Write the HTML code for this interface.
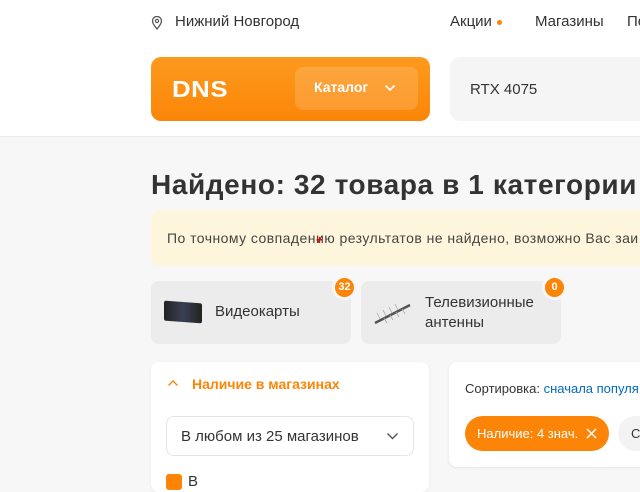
<!DOCTYPE html>
<html><head><meta charset="utf-8"><style>
*{margin:0;padding:0;box-sizing:border-box}
body{width:640px;height:480px;overflow:hidden;background:#f7f7f7;font-family:"Liberation Sans","DejaVu Sans",sans-serif;color:#333;position:relative}
.a{position:absolute}
</style></head><body>
<div class="a" style="left:0;top:0;width:640px;height:137px;background:#fff;border-bottom:1px solid #ececec"></div>
<svg class="a" style="left:151px;top:16px" width="12" height="14" viewBox="0 0 12 14"><path d="M6 13C3 9.5 1.5 7 1.5 5a4.5 4.5 0 0 1 9 0c0 2-1.5 4.5-4.5 8z" fill="none" stroke="#555" stroke-width="1.3"/><circle cx="6" cy="5" r="1.6" fill="none" stroke="#555" stroke-width="1.2"/></svg>
<div class="a" style="left:175px;top:13px;font-size:15px;color:#333">Нижний Новгород</div>
<div class="a" style="left:450px;top:13px;font-size:15px;color:#333">Акции</div>
<div class="a" style="left:497px;top:20px;width:5px;height:5px;border-radius:50%;background:#fc8507"></div>
<div class="a" style="left:535px;top:13px;font-size:15px;color:#333">Магазины</div>
<div class="a" style="left:627px;top:13px;font-size:15px;color:#333">По</div>
<div class="a" style="left:151px;top:57px;width:279px;height:64px;border-radius:10px;background:linear-gradient(180deg,#fd9a1e,#fb8608)"></div>
<div class="a" style="left:172px;top:76px;font-size:23px;font-weight:bold;color:#fff;letter-spacing:0.5px;transform:scaleX(1.12);transform-origin:left;line-height:26px">DNS</div>
<div class="a" style="left:295px;top:67px;width:123px;height:43px;border-radius:8px;background:rgba(255,255,255,0.15)"></div>
<div class="a" style="left:314px;top:79px;font-size:14px;font-weight:bold;color:#fff">Каталог</div>
<svg class="a" style="left:384px;top:84px" width="12" height="8" viewBox="0 0 12 8"><path d="M1.5 1.5L6 6l4.5-4.5" fill="none" stroke="#fff" stroke-width="1.6"/></svg>
<div class="a" style="left:450px;top:57px;width:200px;height:64px;border-radius:10px;background:#f5f5f5"></div>
<div class="a" style="left:470px;top:81px;font-size:15px;color:#333">RTX 4075</div>
<div class="a" style="left:151px;top:169px;font-size:28px;font-weight:bold;color:#333;white-space:nowrap;letter-spacing:0.6px">Найдено: 32 товара в 1 категории</div>
<div class="a" style="left:151px;top:210px;width:500px;height:56px;border-radius:10px;background:#fef6dc"></div>
<div class="a" style="left:167px;top:230px;font-size:14px;color:#444;white-space:nowrap;letter-spacing:0.45px">По точному совпадению результатов не найдено, возможно Вас заи</div>
<div class="a" style="left:151px;top:281px;width:200px;height:63px;border-radius:8px;background:#ececec"></div>
<div class="a" style="left:164px;top:302px;width:38px;height:20px;background:linear-gradient(90deg,#222,#3a3f55,#222);border-radius:2px;transform:skewY(4deg)"></div>
<div class="a" style="left:215px;top:303px;font-size:15px;color:#333">Видеокарты</div>
<div class="a" style="left:332px;top:275px;width:25px;height:25px;border-radius:50%;background:#fc8507;border:3px solid #f7f7f7;color:#fff;font-size:11px;font-weight:bold;text-align:center;line-height:19px">32</div>
<div class="a" style="left:361px;top:281px;width:200px;height:63px;border-radius:8px;background:#ececec"></div>
<svg class="a" style="left:372px;top:302px" width="42" height="24" viewBox="0 0 42 24"><path d="M3 21L38 3" stroke="#555" stroke-width="2.5"/><path d="M8 17l-3-6M14 14l-3-6M20 11l-3-6M26 8l-3-6M12 16l3 5M18 13l3 5M24 10l3 5M30 7l3 5" stroke="#aaa" stroke-width="0.8"/></svg>
<div class="a" style="left:425px;top:293px;font-size:15px;color:#333;line-height:20px">Телевизионные<br>антенны</div>
<div class="a" style="left:542px;top:275px;width:25px;height:25px;border-radius:50%;background:#fc8507;border:3px solid #f7f7f7;color:#fff;font-size:11px;font-weight:bold;text-align:center;line-height:19px">0</div>
<div class="a" style="left:151px;top:362px;width:278px;height:130px;border-radius:8px;background:#fff;box-shadow:0 1px 3px rgba(0,0,0,.06)"></div>
<svg class="a" style="left:167px;top:379px" width="12" height="8" viewBox="0 0 12 8"><path d="M1.5 6.5L6 2l4.5 4.5" fill="none" stroke="#fc8507" stroke-width="1.4"/></svg>
<div class="a" style="left:192px;top:376px;font-size:14px;font-weight:bold;color:#fc8507">Наличие в магазинах</div>
<div class="a" style="left:166px;top:416px;width:248px;height:40px;border-radius:8px;border:1px solid #e4e4e4;background:#fff"></div>
<div class="a" style="left:181px;top:428px;font-size:15px;color:#333">В любом из 25 магазинов</div>
<svg class="a" style="left:386px;top:432px" width="13" height="8" viewBox="0 0 13 8"><path d="M1.5 1.5L6.5 6.5l5-5" fill="none" stroke="#555" stroke-width="1.4"/></svg>
<div class="a" style="left:166px;top:474px;width:16px;height:16px;border-radius:3px;background:#fc8507"></div>
<div class="a" style="left:188px;top:473px;font-size:15px;color:#333">В</div>
<div class="a" style="left:449px;top:362px;width:200px;height:105px;border-radius:8px;background:#fff;box-shadow:0 1px 3px rgba(0,0,0,.08)"></div>
<div class="a" style="left:465px;top:381px;font-size:13px;color:#333;white-space:nowrap">Сортировка: <span style="color:#0069c2">сначала популя</span></div>
<div class="a" style="left:465px;top:416px;width:144px;height:35px;border-radius:18px;background:#fc8507"></div>
<div class="a" style="left:477px;top:426px;font-size:13px;color:#fff;white-space:nowrap">Наличие: 4 знач.</div>
<svg class="a" style="left:586px;top:428px" width="11" height="11" viewBox="0 0 11 11"><path d="M1 1l9 9M10 1l-9 9" stroke="#fff" stroke-width="1.5"/></svg>
<div class="a" style="left:618px;top:416px;width:40px;height:35px;border-radius:18px;background:#f3f3f3"></div>
<div class="a" style="left:631px;top:426px;font-size:13px;color:#333">С</div>
<div class="a" style="left:316px;top:233px;font-size:12px;color:#e00;font-weight:bold">+</div>
</body></html>
